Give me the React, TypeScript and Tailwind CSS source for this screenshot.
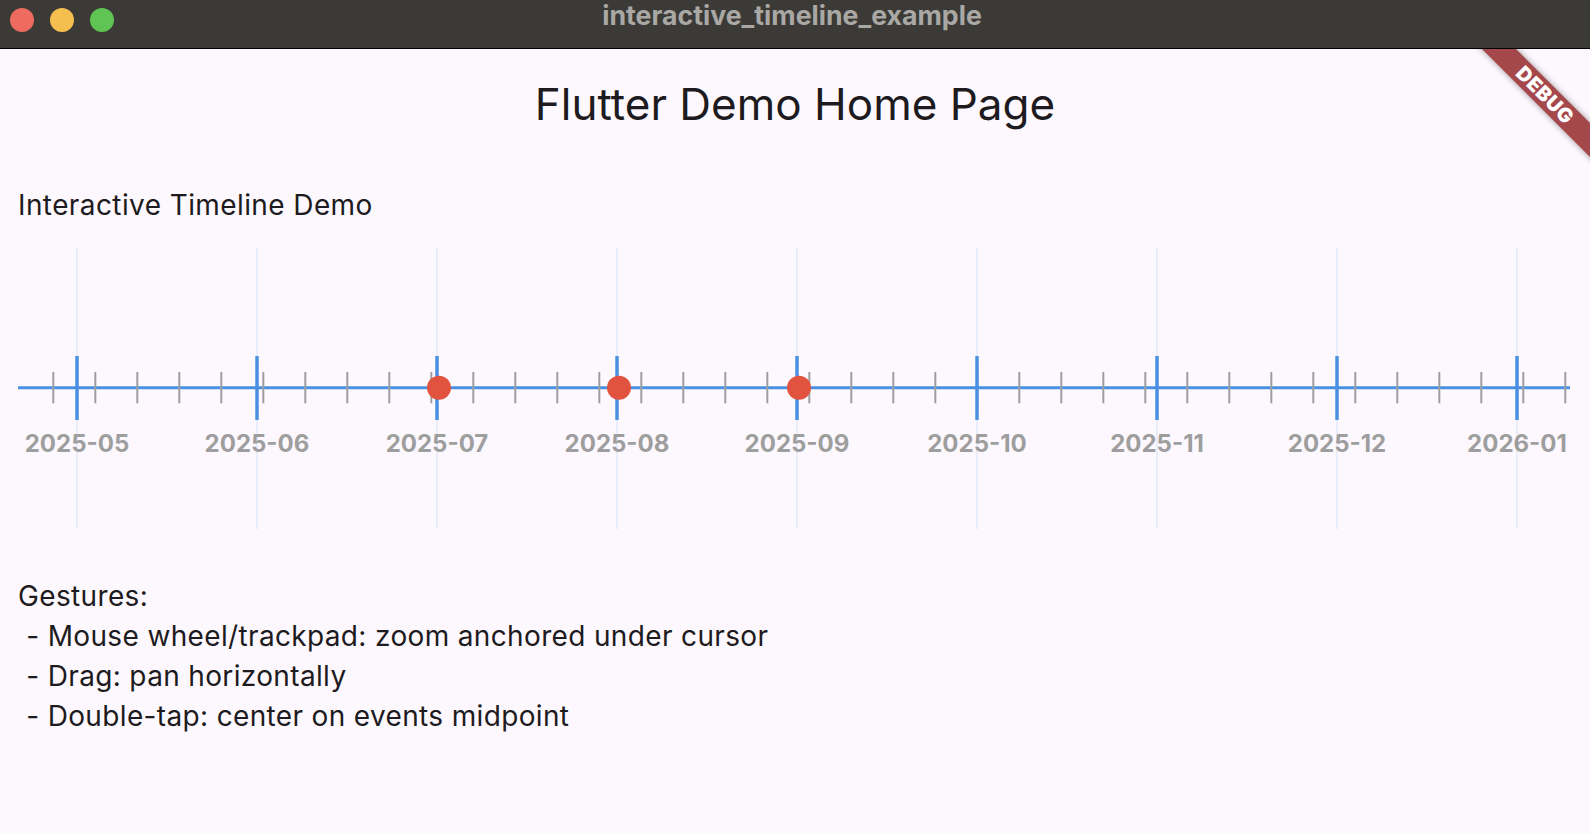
import React from "react";

const MAJOR_X = [77, 257, 437, 617, 797, 977, 1157, 1337, 1517];
const LABELS = ["2025-05", "2025-06", "2025-07", "2025-08", "2025-09", "2025-10", "2025-11", "2025-12", "2026-01"];
const MINOR_X = Array.from({ length: 37 }, (_, i) => 53.3 + 42 * i);
const DOTS = [439, 619, 799];
const OX = 18; // svg left offset in page
const AXIS_Y = 139.7;

function Timeline() {
  return (
    <svg width={1554} height={281} viewBox="0 0 1554 281" className="block">
      {MAJOR_X.map((x) => (
        <line key={"g" + x} x1={x - OX} x2={x - OX} y1={0} y2={281} stroke="#d6e2f6" strokeWidth={1} />
      ))}
      <line x1={0} x2={1552} y1={AXIS_Y} y2={AXIS_Y} stroke="#4a90e2" strokeWidth={3} />
      {MINOR_X.map((x) => (
        <line key={"m" + x} x1={x - OX} x2={x - OX} y1={124} y2={155.3} stroke="#9e9e9e" strokeWidth={2} />
      ))}
      {MAJOR_X.map((x) => (
        <line key={"t" + x} x1={x - OX} x2={x - OX} y1={108} y2={172} stroke="#4a90e2" strokeWidth={3.5} />
      ))}
      {MAJOR_X.map((x, i) => (
        <text
          key={"l" + x}
          x={x - OX}
          y={203.7}
          textAnchor="middle"
          fontFamily="Inter, sans-serif"
          fontWeight={700}
          fontSize={24}
          fill="#9e9e9e"
        >
          {LABELS[i]}
        </text>
      ))}
      {DOTS.map((x) => (
        <circle key={"d" + x} cx={x - OX} cy={AXIS_Y} r={12} fill="#e2533f" />
      ))}
    </svg>
  );
}

export default function App() {
  return (
    <div className="w-[1590px] h-[834px] overflow-hidden bg-[#fdf8fe] font-['Inter',sans-serif] flex flex-col">
      {/* macOS title bar */}
      <div className="relative h-[49px] bg-[#3b3a36] border-b border-black flex items-start justify-center shrink-0">
        <div className="absolute left-[10px] top-[8px] flex gap-[16px]">
          <div className="w-[24px] h-[24px] rounded-full bg-[#ee6b60]" />
          <div className="w-[24px] h-[24px] rounded-full bg-[#f5bf4f]" />
          <div className="w-[24px] h-[24px] rounded-full bg-[#5fc454]" />
        </div>
        <div className="text-[26.7px] leading-[30px] font-bold text-[#a9a8a4] -translate-x-[3px]">interactive_timeline_example</div>
      </div>

      {/* content */}
      <div className="relative flex-1 overflow-hidden">
        {/* debug banner */}
        <div className="absolute right-[-55px] top-[34px] w-[200px] h-[24px] rotate-45 bg-[#a5484c] shadow-[0_0_6px_rgba(0,0,0,0.4)] flex items-center justify-center">
          <span className="text-white text-[20px] font-black tracking-[0.5px] leading-none">DEBUG</span>
        </div>

        {/* app bar */}
        <div className="h-[112px] pt-[29px] flex justify-center">
          <div className="text-[44px] leading-[52px] text-[#1d1b20]">Flutter Demo Home Page</div>
        </div>

        {/* body */}
        <div className="px-[18px] pt-[26px] flex flex-col">
          <div className="text-[28px] leading-[36px] tracking-[0.4px] text-[#1d1b20]">Interactive Timeline Demo</div>
          <div className="mt-[25px]">
            <Timeline />
          </div>
          <div className="mt-[47px] text-[28px] leading-[40px] tracking-[0.35px] text-[#1d1b20] whitespace-pre">
            <div>Gestures:</div>
            <div> - Mouse wheel/trackpad: zoom anchored under cursor</div>
            <div> - Drag: pan horizontally</div>
            <div> - Double-tap: center on events midpoint</div>
          </div>
        </div>
      </div>
    </div>
  );
}
